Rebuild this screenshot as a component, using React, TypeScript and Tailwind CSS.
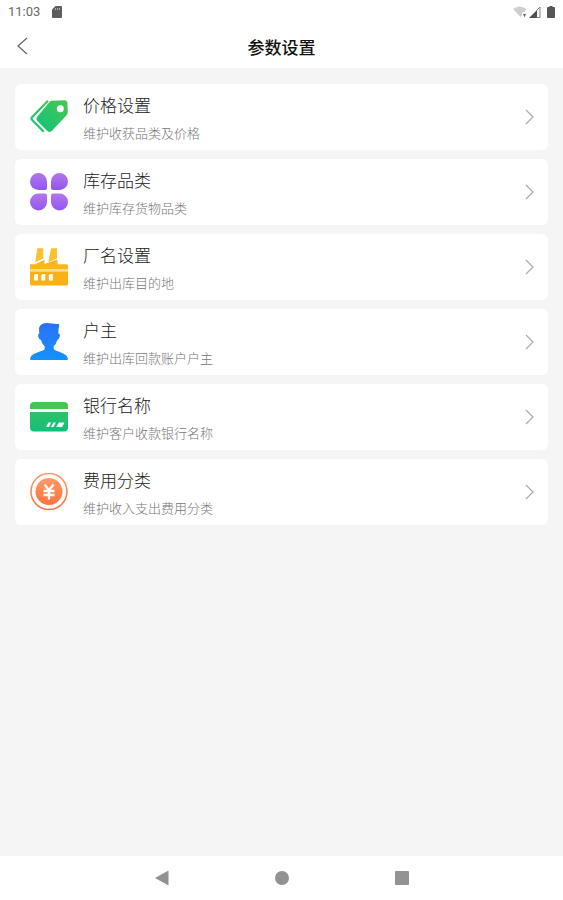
import type { ReactNode } from 'react'

type SettingItem = {
  title: string
  description: string
  icon: ReactNode
}

const PriceIcon = () => (
  <svg viewBox="0 0 38 38" className="h-[38px] w-[38px]" aria-hidden="true">
    <defs>
      <linearGradient id="price" x1="1" y1="0" x2="0" y2="1">
        <stop offset="0" stopColor="#4cc552" />
        <stop offset="1" stopColor="#0cc47c" />
      </linearGradient>
    </defs>
    <path
      fill="url(#price)"
      fillRule="evenodd"
      d="M21.5 2.7 34.5 2.3Q37.2 2.3 37.4 5L37.8 14Q37.8 16 36.3 17.5L22 32.8Q19.5 35 17.3 33L7.300 23Q5.500 21 7 19L19.500 4Q20.500 2.800 21.500 2.700ZM30.300 7.300a3.500 3.500 0 1 0 0 7 3.500 3.500 0 0 0 0-7Z"
    />
    <path
      d="M18 2.800 2.200 19Q.8 20.500 2.200 22L13.800 33.800"
      fill="none"
      stroke="url(#price)"
      strokeWidth="2.200"
    />
  </svg>
)

const CategoryIcon = () => (
  <svg viewBox="0 0 38 38" className="h-[38px] w-[38px]" aria-hidden="true">
    <defs>
      <linearGradient id="category" x1="0" y1="0" x2="0" y2="1">
        <stop offset="0" stopColor="#b277ea" />
        <stop offset="1" stopColor="#9257f0" />
      </linearGradient>
    </defs>
    <g fill="url(#category)">
      <path d="M8.500 0a8.500 8.500 0 0 1 8.500 8.500v6.500q0 2-2 2H8.500A8.500 8.500 0 0 1 8.500 0Z" />
      <path d="M29.500 0a8.500 8.500 0 0 0-8.500 8.500v6.500q0 2 2 2h6.500a8.500 8.500 0 0 0 0-17Z" />
      <path d="M8.500 37.500a8.500 8.500 0 0 0 8.500-8.500v-6.500q0-2-2-2H8.500a8.500 8.500 0 0 0 0 17Z" />
      <path d="M29.500 37.500a8.500 8.500 0 0 1-8.500-8.500v-6.500q0-2 2-2h6.500a8.500 8.500 0 0 1 0 17Z" />
    </g>
  </svg>
)

const FactoryIcon = () => (
  <svg viewBox="0 0 38 38" className="h-[38px] w-[38px]" aria-hidden="true">
    <g fill="#fcc12f">
      <path d="M7.300.2h6v10.300L5.300 14.300Z" />
      <path d="M21 .2h6v10.300L18.300 14.300Z" />
    </g>
    <path fill="#fcb61d" d="M0 16.300H5L14.500 11.800V16L27.500 11.500V16.300H36.500Q38 16.300 38 17.800V21.500H0Z" />
    <path fill="#fcdc85" d="M0 21.500h38v2H0z" />
    <path fill="#fbb014" d="M0 23.500h38v12.500q0 1.500-1.500 1.500h-35Q0 37.500 0 36Z" />
    <g fill="#fff">
      <path d="M5.200 26h2.800v6.500H4v-5z" />
      <path d="M12.500 26h2.800v6.500h-4v-5z" />
      <path d="M20 26h2.800v6.500h-4v-5z" />
    </g>
  </svg>
)

const OwnerIcon = () => (
  <svg viewBox="0 0 38 38" className="h-[38px] w-[38px]" aria-hidden="true">
    <defs>
      <linearGradient id="owner" x1="0" y1="0" x2="0" y2="1">
        <stop offset="0" stopColor="#2a72f8" />
        <stop offset="1" stopColor="#1492ff" />
      </linearGradient>
    </defs>
    <path
      fill="url(#owner)"
      d="M9 5Q10.500.2 17 .1C21 0 25 1.500 28.800.7Q29.800 3 28.500 6L28.300 10.500Q30.500 10.700 29.700 13.500 29 16.700 27.300 17 26.200 21 23.700 23.200V26C25 29 36.800 28.800 38 35.800Q38 37 36.800 37H1.200Q0 37 0 35.800C1.200 28.800 13.500 29 14.700 26V23.200Q12 21 11 17C9 16.500 8 14 8.200 12Q8.300 10.700 9.300 10.500Z"
    />
  </svg>
)

const BankIcon = () => (
  <svg viewBox="0 0 38 38" className="h-[38px] w-[38px]" aria-hidden="true">
    <defs>
      <linearGradient id="bank" x1="0" y1="0" x2="0" y2="1">
        <stop offset="0" stopColor="#2bc36a" />
        <stop offset="1" stopColor="#12bf79" />
      </linearGradient>
    </defs>
    <path fill="#49c552" d="M4 4h30q4 0 4 4v3H0V8q0-4 4-4Z" />
    <path fill="url(#bank)" d="M0 14h38v15.500q0 4-4 4H4q-4 0-4-4Z" />
    <g fill="#fff">
      <path d="M18.300 24.500h3l-2.300 4.500h-3z" />
      <path d="M23.300 24.500h2.500l-2.300 4.500h-2.500z" />
      <path d="M28.800 24.500h5.700l-2.300 4.500h-6z" />
    </g>
  </svg>
)

const FeeIcon = () => (
  <svg viewBox="0 0 38 38" className="h-[38px] w-[38px]" aria-hidden="true">
    <defs>
      <linearGradient id="fee" x1="0" y1="0" x2="0" y2="1">
        <stop offset="0" stopColor="#fb9a67" />
        <stop offset="1" stopColor="#fa733d" />
      </linearGradient>
    </defs>
    <circle cx="19" cy="18.500" r="18" fill="none" stroke="url(#fee)" strokeWidth="1.600" />
    <circle cx="19" cy="18.500" r="13.500" fill="url(#fee)" />
    <path
      d="M14.500 11.500 19 17.300 23.500 11.500M19 17V26.500M13.500 18h11M13.500 22h11"
      fill="none"
      stroke="#fff"
      strokeWidth="2.300"
    />
  </svg>
)

const items: SettingItem[] = [
  { title: '价格设置', description: '维护收获品类及价格', icon: <PriceIcon /> },
  { title: '库存品类', description: '维护库存货物品类', icon: <CategoryIcon /> },
  { title: '厂名设置', description: '维护出库目的地', icon: <FactoryIcon /> },
  { title: '户主', description: '维护出库回款账户户主', icon: <OwnerIcon /> },
  { title: '银行名称', description: '维护客户收款银行名称', icon: <BankIcon /> },
  { title: '费用分类', description: '维护收入支出费用分类', icon: <FeeIcon /> },
]

function StatusBar() {
  return (
    <div className="flex h-6 items-center justify-between px-2">
      <div className="flex items-center gap-3">
        <span className="font-[Roboto,sans-serif] text-[13px] leading-6 text-[#686868]">11:03</span>
        <svg viewBox="0 0 10 12" className="h-3 w-2.5" aria-hidden="true">
          <path fill="#5c5c5c" d="M3.500 0H9q1 0 1 1v10q0 1-1 1H1q-1 0-1-1V3.500Z" />
          <path stroke="#aaa" d="M3.500 2v2M5.500 2v2M7.500 2v2" />
        </svg>
      </div>
      <div className="flex items-center">
        <svg viewBox="0 0 14 12" className="h-3 w-3.5" aria-hidden="true">
          <path fill="#cfcfcf" d="M0 3Q6.500-2 13.500 3L11.500 6H9v3.500L7.500 11Z" />
          <path fill="#666" d="M10 8h3l-1.500 3.500z" />
        </svg>
        <svg viewBox="0 0 12 12" className="ml-0.5 h-3 w-3" aria-hidden="true">
          <path fill="#505050" d="M0 12 8 4v8Z" />
          <path fill="none" stroke="#808080" d="M7.500 4.500 11 1v10.500H7.500" />
        </svg>
        <svg viewBox="0 0 8 12" className="ml-1.5 h-3 w-2" aria-hidden="true">
          <path fill="#565656" d="M2.500 0h3v1H7q1 0 1 1v9q0 1-1 1H1q-1 0-1-1V2q0-1 1-1h1.500Z" />
        </svg>
      </div>
    </div>
  )
}

function Header() {
  return (
    <header className="grid h-11 grid-cols-[1fr_auto_1fr] items-center px-4">
      <button type="button" aria-label="返回" className="flex h-11 w-8 items-center">
        <svg viewBox="0 0 12 18" className="h-[18px] w-3" aria-hidden="true">
          <path d="M11 1 2 9l9 8" fill="none" stroke="#666" strokeWidth="1.200" />
        </svg>
      </button>
      <h1 className="pt-0.5 text-[17px] leading-6 font-medium text-[#111]">参数设置</h1>
    </header>
  )
}

function SettingCard({ title, description, icon }: SettingItem) {
  return (
    <li>
      <button
        type="button"
        className="flex w-full items-center rounded-md bg-white py-[7px] pr-3.5 pl-[15px] text-left"
      >
        {icon}
        <span className="ml-[15px] flex flex-1 flex-col gap-1.5 pt-0.5">
          <span className="text-[17px] leading-6 font-light text-[#222]">{title}</span>
          <span className="text-[13px] leading-5 font-light text-[#777]">{description}</span>
        </span>
        <svg viewBox="0 0 9 16" className="h-4 w-[9px]" aria-hidden="true">
          <path d="m1 1 7 7-7 7" fill="none" stroke="#aaa" strokeWidth="1.200" />
        </svg>
      </button>
    </li>
  )
}

function NavigationBar() {
  return (
    <nav className="flex h-11 items-center justify-center bg-white">
      <button type="button" aria-label="后退" className="flex h-11 w-[120px] items-center justify-center">
        <svg viewBox="0 0 14 16" className="h-4 w-3.5" aria-hidden="true">
          <path fill="#929292" d="M0 8 13.500.5v15Z" />
        </svg>
      </button>
      <button type="button" aria-label="主页" className="flex h-11 w-[120px] items-center justify-center">
        <span className="h-3.5 w-3.5 rounded-full bg-[#929292]" />
      </button>
      <button type="button" aria-label="最近任务" className="flex h-11 w-[120px] items-center justify-center">
        <span className="h-3.5 w-3.5 rounded-[1px] bg-[#929292]" />
      </button>
    </nav>
  )
}

export default function App() {
  return (
    <div className="flex min-h-screen flex-col bg-[#f5f5f5] font-['Noto_Sans_CJK_SC',sans-serif]">
      <div className="bg-white">
        <StatusBar />
        <Header />
      </div>
      <main className="flex-1 px-[15px] py-4">
        <ul className="flex flex-col gap-[9px]">
          {items.map((item) => (
            <SettingCard key={item.title} {...item} />
          ))}
        </ul>
      </main>
      <NavigationBar />
    </div>
  )
}
